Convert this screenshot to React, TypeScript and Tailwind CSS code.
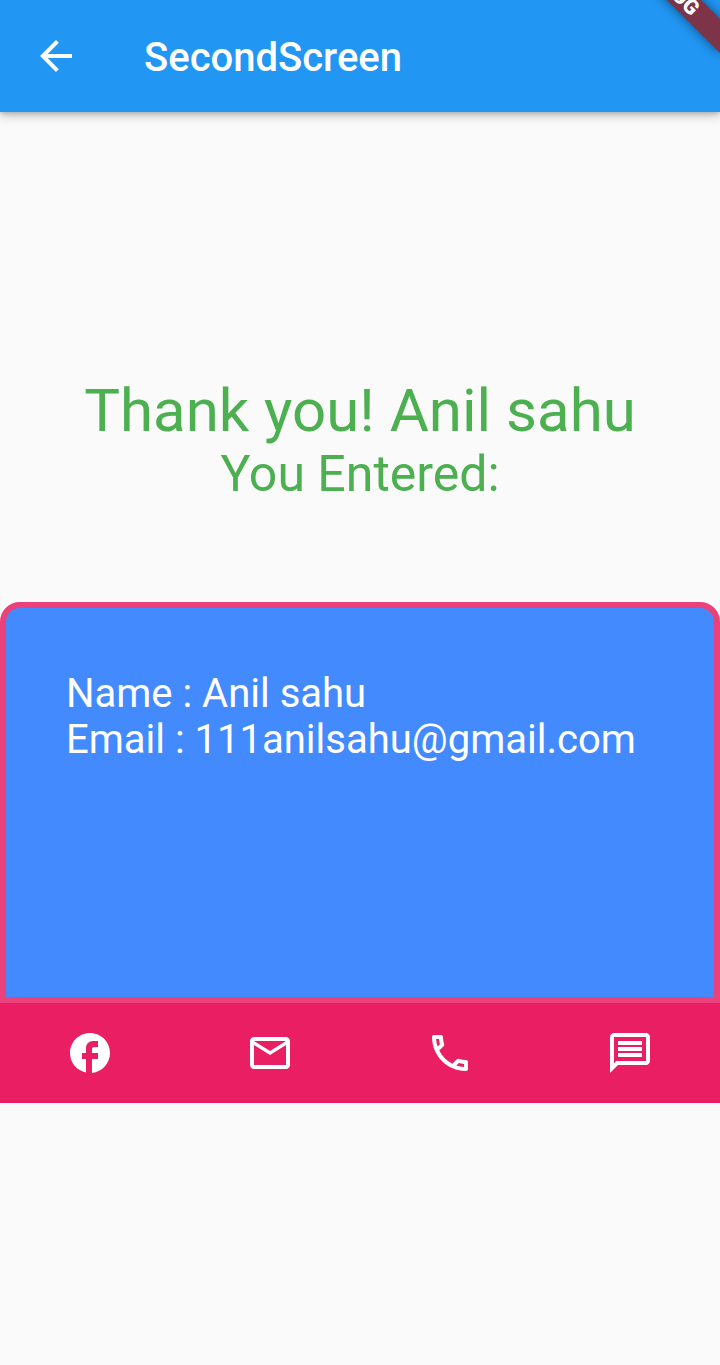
import React from 'react';

type IconProps = { path: string };

function Icon({ path }: IconProps) {
  return (
    <svg viewBox="0 0 24 24" className="size-12 shrink-0 fill-current" aria-hidden="true">
      <path d={path} />
    </svg>
  );
}

const ARROW_BACK = 'M20 11H7.83l5.59-5.59L12 4l-8 8 8 8 1.41-1.41L7.83 13H20v-2z';

const contacts = [
  {
    label: 'Facebook',
    href: '#facebook',
    path: 'M22 12c0-5.52-4.48-10-10-10S2 6.48 2 12c0 4.84 3.44 8.87 8 9.8V15H8v-3h2V9.5C10 7.57 11.57 6 13.5 6H16v3h-2c-.55 0-1 .45-1 1v2h3v3h-3v6.95c5.05-.5 9-4.76 9-9.95z',
  },
  {
    label: 'Mail',
    href: '#mail',
    path: 'M22 6c0-1.1-.9-2-2-2H4c-1.1 0-2 .9-2 2v12c0 1.1.9 2 2 2h16c1.1 0 2-.9 2-2V6zm-2 0l-8 4.99L4 6h16zm0 12H4V8l8 5 8-5v10z',
  },
  {
    label: 'Phone',
    href: '#phone',
    path: 'M6.54 5c.06.89.21 1.76.45 2.59l-1.2 1.2c-.41-1.2-.67-2.47-.76-3.79h1.51m9.86 12.02c.85.24 1.72.39 2.6.45v1.49c-1.32-.09-2.59-.35-3.8-.75l1.2-1.19M7.5 3H4c-.55 0-1 .45-1 1 0 9.39 7.61 17 17 17 .55 0 1-.45 1-1v-3.49c0-.55-.45-1-1-1-1.24 0-2.45-.2-3.57-.57-.1-.04-.21-.05-.31-.05-.26 0-.51.1-.71.29l-2.2 2.2c-2.83-1.45-5.15-3.76-6.59-6.59l2.2-2.2c.28-.28.36-.67.25-1.02C8.7 6.45 8.5 5.25 8.5 4c0-.55-.45-1-1-1z',
  },
  {
    label: 'Message',
    href: '#message',
    path: 'M4 4h16v12H5.17L4 17.17V4m0-2c-1.1 0-1.99.9-1.99 2L2 22l4-4h14c1.1 0 2-.9 2-2V4c0-1.1-.9-2-2-2H4zm2 10h12v2H6v-2zm0-3h12v2H6V9zm0-3h12v2H6V6z',
  },
];

export default function App() {
  return (
    <div className="relative flex min-h-screen flex-col overflow-hidden bg-[#fafafa] font-['Roboto',sans-serif]">
      <header className="z-10 flex h-28 shrink-0 items-center gap-16 bg-[#2196f3] px-8 text-white shadow-[0_4px_10px_rgba(0,0,0,0.2),0_2px_4px_rgba(0,0,0,0.15)]">
        <button type="button" aria-label="Back" className="cursor-pointer">
          <Icon path={ARROW_BACK} />
        </button>
        <h1 className="pt-1 text-[40px] leading-12 font-medium">SecondScreen</h1>
      </header>

      <div className="pointer-events-none absolute -top-6 -right-8 z-20 flex h-6 w-40 rotate-45 items-center justify-center bg-[#7d3348] text-[21px] leading-6 font-black text-white shadow-[0_0_12px_rgba(0,0,0,0.5)]">
        DEBUG
      </div>

      <main className="flex flex-1 flex-col justify-center">
        <div className="mb-25 pt-0.5 text-center text-[#4caf50]">
          <p className="text-[60px] leading-[70px]">Thank you! Anil sahu</p>
          <p className="text-[50px] leading-14">You Entered:</p>
        </div>
        <section className="min-h-[401px] rounded-t-[20px] border-6 border-[#ec407a] bg-[#448aff] px-15 pt-[63px] pb-15 text-[40px] leading-[46px] text-white">
          <p>Name : Anil sahu</p>
          <p>Email : 111anilsahu@gmail.com</p>
        </section>
        <nav className="grid h-25 grid-cols-4 place-items-center bg-[#e91e63] text-white">
          {contacts.map((c) => (
            <a key={c.label} href={c.href} aria-label={c.label}>
              <Icon path={c.path} />
            </a>
          ))}
        </nav>
      </main>
    </div>
  );
}
